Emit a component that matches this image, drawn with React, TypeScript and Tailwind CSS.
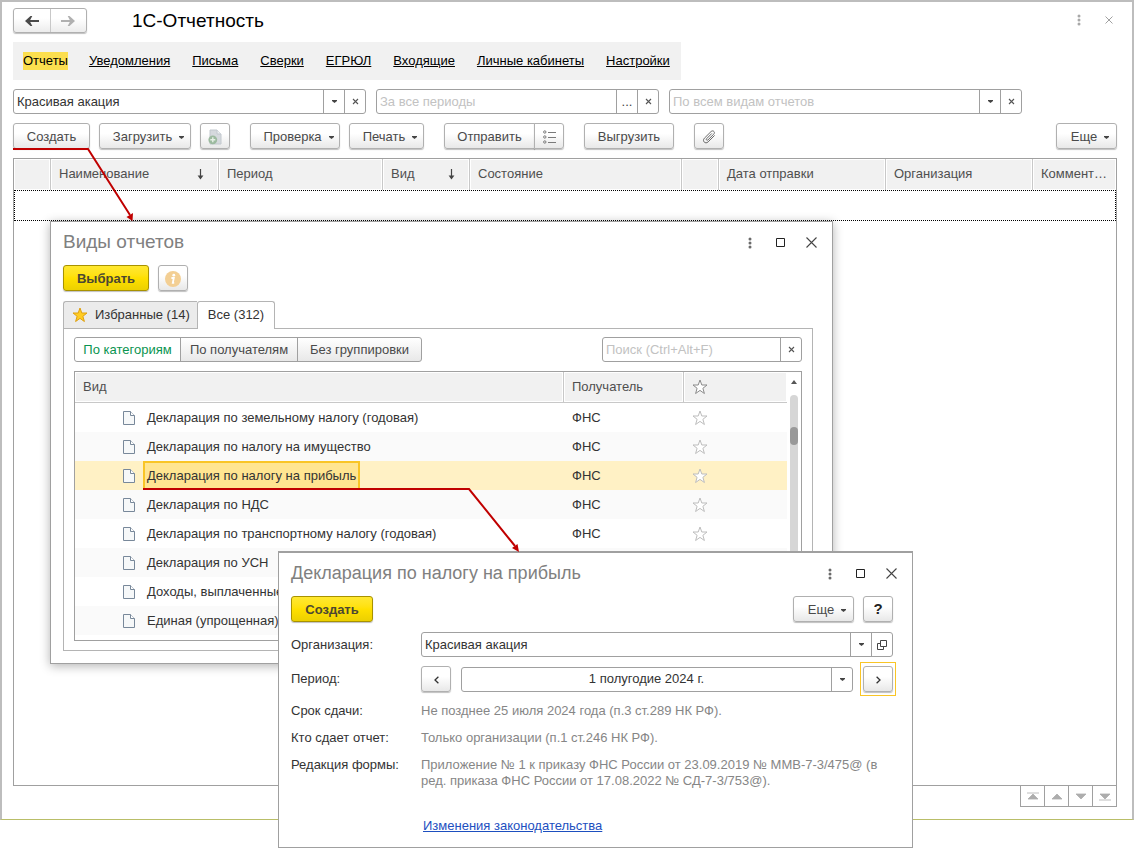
import type { ReactNode } from 'react';

const FONT = "font-['Liberation_Sans',Arial,sans-serif]";

const sections = ['Отчеты', 'Уведомления', 'Письма', 'Сверки', 'ЕГРЮЛ', 'Входящие', 'Личные кабинеты', 'Настройки'];

const reports = [
  'Декларация по земельному налогу (годовая)',
  'Декларация по налогу на имущество',
  'Декларация по налогу на прибыль',
  'Декларация по НДС',
  'Декларация по транспортному налогу (годовая)',
  'Декларация по УСН',
  'Доходы, выплаченные',
  'Единая (упрощенная)',
];

const SELECTED = 2;

function Caret() {
  return (
    <svg width="5" height="3" viewBox="0 0 5 3" className="shrink-0" aria-hidden="true">
      <path d="M0 0h5v1L2.5 3 0 1z" fill="#444" />
    </svg>
  );
}

function Cross() {
  return (
    <svg width="7" height="7" viewBox="0 0 7 7" aria-hidden="true">
      <path d="M1 1l5 5M6 1L1 6" stroke="#555" strokeWidth="1.1" fill="none" />
    </svg>
  );
}

function Dots({ color }: { color: string }) {
  return (
    <svg width="4" height="12" viewBox="0 0 4 12" fill={color} aria-hidden="true">
      <circle cx="2" cy="2" r="1.5" />
      <circle cx="2" cy="6" r="1.5" />
      <circle cx="2" cy="10" r="1.5" />
    </svg>
  );
}

function Star({ color, fill = '#fff' }: { color: string; fill?: string }) {
  return (
    <svg width="16" height="16" viewBox="0 0 16 16" className="block" aria-hidden="true">
      <path d="M8 1l1.8 5h5.2l-4.1 3.3 1.5 5.2L8 11.4l-4.4 3.1 1.5-5.2L1 6h5.2z" fill={fill} stroke={color} />
    </svg>
  );
}

function SortArrow() {
  return (
    <svg width="7" height="11" viewBox="0 0 7 11" aria-hidden="true">
      <path d="M3.5 0v9" stroke="#444" strokeWidth="1.2" />
      <path d="M0.6 6.6h5.8L3.5 10.4z" fill="#444" />
    </svg>
  );
}

function PageIcon() {
  return (
    <svg width="12" height="14" viewBox="0 0 12 14" className="block shrink-0" aria-hidden="true">
      <path d="M0.5 0.5h7l4 4v9h-11z" fill="#f6f8f9" stroke="#78889a" />
      <path d="M7.5 0.5v4h4" fill="#fff" stroke="#78889a" />
    </svg>
  );
}

interface ButtonProps {
  children: ReactNode;
  className?: string;
  primary?: boolean;
  menu?: boolean;
  label?: string;
}

function Button({ children, className = '', primary, menu, label }: ButtonProps) {
  return (
    <button
      type="button"
      aria-label={label}
      className={`flex h-[26px] shrink-0 items-center justify-center rounded-[3px] border pt-px shadow-[0_1px_1px_rgba(0,0,0,0.25)] ${
        primary
          ? 'border-[#a89200] bg-linear-to-b from-[#ffe830] via-[#ffe000] to-[#ecd000] font-bold text-[#4b4733]'
          : 'border-[#b0b0b0] bg-linear-to-b from-white from-40% to-[#e8e8e8] text-[#4a4a4a]'
      } ${menu ? 'gap-[7px] pl-[7px]' : ''} ${className}`}
    >
      {children}
      {menu && <span className="pt-[2px]"><Caret /></span>}
    </button>
  );
}

interface FieldProps {
  id: string;
  label?: string;
  value?: string;
  placeholder?: string;
  className?: string;
  inputClass?: string;
  actions: { label: string; icon: ReactNode }[];
}

function Field({ id, label, value, placeholder, className = '', inputClass = '', actions }: FieldProps) {
  return (
    <div className={`flex h-[25px] rounded-[3px] border border-[#a0a0a0] bg-white ${className}`}>
      <input
        id={id}
        aria-label={label}
        defaultValue={value}
        placeholder={placeholder}
        className={`min-w-0 flex-1 px-[3px] text-[13px] text-[#333] outline-none placeholder:text-[#c2c2c2] ${inputClass}`}
      />
      {actions.map((action) => (
        <button
          key={action.label}
          type="button"
          aria-label={action.label}
          className="flex w-[21px] shrink-0 items-center justify-center border-l border-[#a0a0a0] text-[#444]"
        >
          {action.icon}
        </button>
      ))}
    </div>
  );
}

const openList = { label: 'Открыть список', icon: <Caret /> };
const clear = { label: 'Очистить', icon: <Cross /> };

function WindowControls() {
  return (
    <div className="flex items-center gap-[18px]">
      <button type="button" aria-label="Меню окна" className="flex w-[10px] justify-center">
        <Dots color="#6a6a6a" />
      </button>
      <button type="button" aria-label="Развернуть" className="flex w-[15px] justify-center">
        <svg width="9" height="9" viewBox="0 0 9 9">
          <path d="M0.5 0.5h8v8h-8z" fill="none" stroke="#222" />
        </svg>
      </button>
      <button type="button" aria-label="Закрыть" className="flex w-[11px] justify-center">
        <svg width="11" height="11" viewBox="0 0 11 11">
          <path d="M0.5 0.5l10 10M10.5 0.5l-10 10" stroke="#444" strokeWidth="1.1" />
        </svg>
      </button>
    </div>
  );
}

function MainHeader() {
  return (
    <header className="flex h-[25px] items-center">
      <div className="flex h-[25px] w-[74px] rounded-[3px] border border-[#b0b0b0] bg-linear-to-b from-white from-40% to-[#ececec] shadow-[0_1px_1px_rgba(0,0,0,0.25)]">
        <button type="button" aria-label="Назад" className="flex flex-1 items-center justify-center">
          <svg width="14" height="10" viewBox="0 0 14 10">
            <path d="M5.5 0L0 5l5.5 5h1.8L5.2 6H14V4H5.2l2.1-4z" fill="#4a4a4a" />
          </svg>
        </button>
        <button type="button" aria-label="Вперед" className="flex flex-1 items-center justify-center border-l border-[#c8c8c8]">
          <svg width="14" height="10" viewBox="0 0 14 10">
            <path d="M8.5 0L14 5l-5.5 5H6.7l2.1-4H0V4h8.8L6.7 0z" fill="#b0b0b0" />
          </svg>
        </button>
      </div>
      <h1 className="ml-[45px] text-[19px] leading-6 text-black">1С-Отчетность</h1>
      <div className="mr-1 mb-[2px] ml-auto flex items-center gap-[22px]">
        <button type="button" aria-label="Меню" className="flex w-2 justify-center">
          <Dots color="#a8a8a8" />
        </button>
        <button type="button" aria-label="Закрыть раздел">
          <svg width="8" height="8" viewBox="0 0 8 8">
            <path d="M0.5 0.5l7 7M7.5 0.5l-7 7" stroke="#a0a0a0" />
          </svg>
        </button>
      </div>
    </header>
  );
}

function Toolbar() {
  return (
    <div className="mt-[9px] flex">
      <Button className="w-[77px]">Создать</Button>
      <Button className="ml-[9px] w-[92px]" menu>Загрузить</Button>
      <Button className="ml-[9px] w-[30px]" label="Добавить файл">
        <svg width="14" height="16" viewBox="0 0 14 16">
          <path d="M2 1h7l4 4v10H2z" fill="#d5d9dd" stroke="#c2c8ce" />
          <path d="M9 1v4h4" fill="#eceff1" stroke="#c2c8ce" />
          <circle cx="4.8" cy="10.8" r="4.4" fill="#9cba9f" />
          <path d="M4.8 8.3v5M2.3 10.8h5" stroke="#e6f0e6" strokeWidth="1.4" />
        </svg>
      </Button>
      <Button className="ml-5 w-[90px]" menu>Проверка</Button>
      <Button className="ml-[9px] w-[75px]" menu>Печать</Button>
      <div className="ml-5 flex">
        <Button className="w-[91px] rounded-r-none">Отправить</Button>
        <Button className="-ml-px w-[30px] rounded-l-none" label="Список отправки">
          <svg width="13" height="14" viewBox="0 0 13 14" fill="none" stroke="#7a7a7a">
            <circle cx="1.8" cy="2" r="1.2" />
            <circle cx="1.8" cy="7" r="1.2" />
            <circle cx="1.8" cy="12" r="1.2" />
            <path d="M5 2.5h8M5 7.5h8M5 12.5h8" />
          </svg>
        </Button>
      </div>
      <Button className="ml-5 w-[90px]">Выгрузить</Button>
      <Button className="ml-5 w-[30px]" label="Вложения">
        <svg width="14" height="14" viewBox="0 0 14 14" fill="none" stroke="#6a6a6a">
          <path d="M9.9 3.4L4.6 8.7c-.9.9.4 2.2 1.3 1.3l5.8-5.8c2-2-.7-4.6-2.7-2.6L2.4 8.2c-2.7 2.7 1 6.4 3.7 3.7L12.6 5.4" />
        </svg>
      </Button>
      <Button className="ml-auto w-[61px]" menu>Еще</Button>
    </div>
  );
}

const columns = [
  { title: '', width: 'w-[37px]' },
  { title: 'Наименование', width: 'w-[168px]', sorted: true },
  { title: 'Период', width: 'w-[164px]' },
  { title: 'Вид', width: 'w-[87px]', sorted: true },
  { title: 'Состояние', width: '' },
  { title: '', width: 'w-[37px]' },
  { title: 'Дата отправки', width: 'w-[167px]' },
  { title: 'Организация', width: 'w-[147px]' },
  { title: 'Коммент…', width: 'w-[83px]' },
];

function ReportJournal() {
  return (
    <div className="mt-[9px] flex-1 border border-[#a0a0a0]">
      <table className="w-full table-fixed border-separate border-spacing-0 text-left">
        <thead>
          <tr className="h-[31px]">
            {columns.map((col, i) => (
              <th
                key={i}
                className={`border-r border-[#c8c8c8] bg-[#f1f1f1] p-0 font-normal text-[#4f4f4f] shadow-[inset_0_0_0_1px_#fff] last:border-r-0 ${col.width}`}
              >
                <div className="flex items-center justify-between pr-[14px] pb-px pl-2 last:pr-0">
                  <span className="whitespace-nowrap">{col.title}</span>
                  {col.sorted && <span className="pr-[14px]"><SortArrow /></span>}
                </div>
              </th>
            ))}
          </tr>
        </thead>
        <tbody>
          <tr className="h-[31px]">
            <td colSpan={columns.length} className="border border-dotted border-black p-0" />
          </tr>
        </tbody>
      </table>
    </div>
  );
}

const pagerIcons = [
  { label: 'В начало', path: 'M0 1h12M1 7h10L6 2z' },
  { label: 'Вверх', path: 'M1 7h10L6 2z' },
  { label: 'Вниз', path: 'M1 2h10L6 7z' },
  { label: 'В конец', path: 'M1 2h10L6 7zM0 8h12' },
];

function Pager() {
  return (
    <div className="-mt-px ml-auto flex h-[22px] border border-[#a0a0a0] bg-white">
      {pagerIcons.map((item) => (
        <button
          key={item.label}
          type="button"
          aria-label={item.label}
          className="flex w-6 items-center justify-center border-l border-[#a0a0a0] first:w-[23px] first:border-l-0"
        >
          <svg width="12" height="9" viewBox="0 0 12 9">
            <path d={item.path} fill="#adadad" stroke="#adadad" strokeWidth="0.8" />
          </svg>
        </button>
      ))}
    </div>
  );
}

function ReportTypesWindow() {
  return (
    <section
      aria-label="Виды отчетов"
      className="absolute top-[221px] left-[50px] w-[783px] border border-[#a0a0a0] bg-white px-3 pb-3 shadow-[0_2px_10px_rgba(0,0,0,0.3)]"
    >
      <div className="mb-[2px] flex h-[41px] items-center justify-between pr-[3px]">
        <h2 className="text-[19px] text-[#808080]">Виды отчетов</h2>
        <WindowControls />
      </div>
      <div className="flex gap-[9px]">
        <Button primary className="w-[86px]">Выбрать</Button>
        <Button className="w-[30px]" label="Справка">
          <svg width="16" height="16" viewBox="0 0 16 16">
            <circle cx="8" cy="8" r="8" fill="#f3cf94" />
            <circle cx="8.8" cy="4.2" r="1.4" fill="#fff" />
            <path d="M6.4 7h2.4L7.8 11.8h1.4" stroke="#fff" strokeWidth="1.8" fill="none" />
          </svg>
        </Button>
      </div>
      <div role="tablist" className="relative z-10 -mb-px mt-[10px] flex">
        <button
          type="button"
          role="tab"
          aria-selected="false"
          className="flex h-7 w-[134px] items-center gap-[7px] rounded-tl-[3px] border border-r-0 border-[#b4b4b4] bg-[#ebebeb] pl-2 whitespace-nowrap text-[#333]"
        >
          <Star color="#dfa010" fill="#ffcc22" />
          Избранные (14)
        </button>
        <button
          type="button"
          role="tab"
          aria-selected="true"
          className="h-7 w-[78px] rounded-t-[3px] border border-b-0 border-[#b4b4b4] bg-white pb-px text-[#333]"
        >
          Все (312)
        </button>
      </div>
      <div className="mr-[7px] border border-[#b4b4b4] px-[10px] pt-2 pb-[9px]">
        <div className="flex justify-between">
          <div className="flex h-[25px] rounded-[3px] border border-[#a0a0a0] bg-linear-to-b from-white to-[#e8e8e8] text-[#4a4a4a]">
            <button type="button" aria-pressed="true" className="w-[105px] rounded-l-[3px] bg-white text-[#0a9450]">По категориям</button>
            <button type="button" className="w-[117px] border-l border-[#a0a0a0]">По получателям</button>
            <button type="button" className="w-[124px] border-l border-[#a0a0a0]">Без группировки</button>
          </div>
          <Field id="search" label="Поиск" placeholder="Поиск (Ctrl+Alt+F)" className="w-[200px]" actions={[clear]} />
        </div>
        <div className="mt-[9px] flex border border-[#a0a0a0] pb-[5px]">
          <table className="flex-1 table-fixed border-separate border-spacing-0 text-left">
            <thead>
              <tr className="h-[31px] text-[#4f4f4f]">
                <th className="border-r border-b border-[#c8c8c8] bg-[#f1f1f1] px-2 py-0 font-normal shadow-[inset_0_0_0_1px_#fff]">Вид</th>
                <th className="w-[120px] border-r border-b border-[#c8c8c8] bg-[#f1f1f1] px-2 py-0 font-normal shadow-[inset_0_0_0_1px_#fff]">Получатель</th>
                <th aria-label="Избранное" className="w-[103px] border-b border-[#c8c8c8] bg-[#f1f1f1] px-2 py-0 shadow-[inset_0_0_0_1px_#fff]">
                  <Star color="#8a8a8a" />
                </th>
              </tr>
            </thead>
            <tbody>
              {reports.map((name, i) => (
                <tr
                  key={name}
                  className={`h-[29px] text-[#333] ${i === SELECTED ? 'bg-[#fff1c5]' : i % 2 ? 'bg-[#fafafa]' : 'bg-white'}`}
                >
                  <td className="p-0">
                    <div className="flex items-center pl-12">
                      <PageIcon />
                      <span
                        className={`ml-2 flex h-[29px] items-center border-2 px-[2px] whitespace-nowrap ${
                          i === SELECTED ? 'border-[#f9c526] bg-[#ffe591]' : 'border-transparent'
                        }`}
                      >
                        {name}
                      </span>
                    </div>
                  </td>
                  <td className="px-2 py-0">ФНС</td>
                  <td className="px-2 py-0"><Star color="#bdbdbd" /></td>
                </tr>
              ))}
            </tbody>
          </table>
          <div className="flex w-[14px] flex-col items-center pt-2">
            <svg width="6" height="4" viewBox="0 0 6 4"><path d="M3 0l3 4H0z" fill="#555" /></svg>
            <div className="mt-[11px] w-2 flex-1 rounded bg-[#d6d6d6] pt-8">
              <div className="h-[18px] rounded bg-[#999]" />
            </div>
          </div>
        </div>
      </div>
    </section>
  );
}

function DeclarationWindow() {
  return (
    <section
      aria-label="Декларация по налогу на прибыль"
      className="absolute top-[551px] left-[278px] w-[635px] border border-t-2 border-[#a0a0a0] bg-white px-3 pb-[13px]"
    >
      <div className="mb-[2px] flex h-[41px] items-center justify-between pr-[3px]">
        <h2 className="text-[18px] text-[#808080]">Декларация по налогу на прибыль</h2>
        <WindowControls />
      </div>
      <div className="flex pr-[7px]">
        <Button primary className="w-[82px]">Создать</Button>
        <Button className="ml-auto w-[61px]" menu>Еще</Button>
        <Button className="ml-[9px] w-[30px] text-[15px] font-bold text-[#222]">?</Button>
      </div>
      <div className="mt-[10px] grid grid-cols-[130px_1fr] items-center pr-[7px] text-[#333]">
        <label htmlFor="org">Организация:</label>
        <Field
          id="org"
          value="Красивая акация"
          actions={[
            openList,
            {
              label: 'Открыть',
              icon: (
                <svg width="10" height="10" viewBox="0 0 10 10" fill="none" stroke="#444">
                  <path d="M3.5 0.5h6v6h-6zM3 3.5H0.5v6h6V7" />
                </svg>
              ),
            },
          ]}
        />
      </div>
      <div className="mt-[9px] grid grid-cols-[130px_1fr] items-center pr-[7px] text-[#333]">
        <label htmlFor="period">Период:</label>
        <div className="flex items-center gap-[10px]">
          <Button className="w-[30px]" label="Предыдущий период">
            <svg width="5" height="8" viewBox="0 0 5 8"><path d="M4.4 0.8L1 4l3.4 3.2" stroke="#333" strokeWidth="1.3" fill="none" /></svg>
          </Button>
          <Field id="period" value="1 полугодие 2024 г." className="flex-1" inputClass="text-center" actions={[openList]} />
          <div className="-mx-[3px] -my-1 border border-[#f9c526] px-[2px] py-[3px]">
            <Button className="w-[30px]" label="Следующий период">
              <svg width="5" height="8" viewBox="0 0 5 8"><path d="M0.6 0.8L4 4 0.6 7.2" stroke="#333" strokeWidth="1.3" fill="none" /></svg>
            </Button>
          </div>
        </div>
      </div>
      <dl className="mt-[11px] grid grid-cols-[130px_1fr] gap-y-[11px] pr-[7px] leading-4 text-[#333]">
        <dt>Срок сдачи:</dt>
        <dd className="text-[#868686]">Не позднее 25 июля 2024 года (п.3 ст.289 НК РФ).</dd>
        <dt>Кто сдает отчет:</dt>
        <dd className="text-[#868686]">Только организации (п.1 ст.246 НК РФ).</dd>
        <dt>Редакция формы:</dt>
        <dd className="text-[#868686]">
          Приложение № 1 к приказу ФНС России от 23.09.2019 № ММВ-7-3/475@ (в ред. приказа ФНС России от 17.08.2022 № СД-7-3/753@).
        </dd>
      </dl>
      <div className="mt-[29px] ml-[132px] leading-4">
        <a href="#changes" className="text-[#1d4fbf] underline">Изменения законодательства</a>
      </div>
    </section>
  );
}

export default function App() {
  return (
    <div className={`relative flex min-h-screen flex-col bg-white pb-[30px] text-[13px] ${FONT}`}>
      <main className="flex flex-1 flex-col border-2 border-b border-[#bdbdbd] border-b-[#b9be68] px-[11px] pt-[6px] pb-3">
        <div className="flex flex-1 flex-col pr-1">
          <MainHeader />
          <nav className="mt-[9px] flex h-[38px] w-fit items-center gap-5 bg-[#f1f1f1] px-[10px]">
            {sections.map((name, i) => (
              <a
                key={name}
                href="#section"
                className={`leading-[18px] text-black ${i === 0 ? 'bg-[#fcdf4f]' : 'px-px underline'}`}
              >
                {name}
              </a>
            ))}
          </nav>
          <div className="mt-[9px] flex gap-[10px]">
            <Field id="filter-org" label="Организация" value="Красивая акация" className="w-[353px]" actions={[openList, clear]} />
            <Field
              id="filter-period"
              label="Период отчетов"
              placeholder="За все периоды"
              className="w-[283px]"
              actions={[{ label: 'Выбрать период', icon: '...' }, clear]}
            />
            <Field id="filter-kind" label="Вид отчетов" placeholder="По всем видам отчетов" className="w-[353px]" actions={[openList, clear]} />
          </div>
          <Toolbar />
          <ReportJournal />
          <Pager />
        </div>
      </main>

      {/* callout from the "Создать" button to the report types window */}
      <svg width="125" height="76" viewBox="0 0 125 76" className="pointer-events-none absolute top-[146px] left-[13px] z-10" aria-hidden="true">
        <path d="M0 3h75l42 66" fill="none" stroke="#c00000" strokeWidth="2" />
        <path d="M119.5 75l-6-4 6.5-4z" fill="#c00000" />
      </svg>
      <ReportTypesWindow />
      {/* callout from the selected report to its declaration window */}
      <svg width="380" height="66" viewBox="0 0 380 66" className="pointer-events-none absolute top-[486px] left-[143px] z-10" aria-hidden="true">
        <path d="M0 3h326l46 57" fill="none" stroke="#c00000" strokeWidth="2" />
        <path d="M376 66l-7-4 5.5-4z" fill="#c00000" />
      </svg>
      <div className="relative z-20 contents">
        <DeclarationWindow />
      </div>
    </div>
  );
}
